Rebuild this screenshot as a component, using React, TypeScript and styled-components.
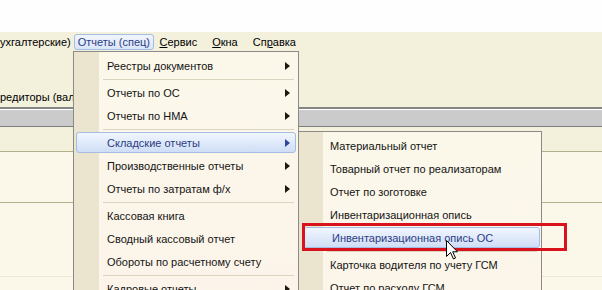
import React from 'react';
import styled, { createGlobalStyle, css } from 'styled-components';

const GlobalStyle = createGlobalStyle`
  html, body {
    margin: 0;
    padding: 0;
    background: #fefefe;
  }
  body {
    font-family: "Liberation Sans", Arial, sans-serif;
    font-size: 11px;
    color: #000000;
  }
`;

const Screen = styled.div`
  position: relative;
  width: 602px;
  height: 290px;
  overflow: hidden;
  background: #fbf8ea;
`;

const BlankTop = styled.div`
  height: 32px;
  background: #fefefe;
`;

const Toolbar = styled.div`
  height: 75px;
  background: #f3f0dc;
  display: flex;
  flex-direction: column;
`;

const MenuBar = styled.div`
  display: flex;
  align-items: center;
  height: 16px;
  margin-top: 2px;
  white-space: nowrap;
`;

const MenuTitle = styled.div<{ $active?: boolean; $first?: boolean }>`
  height: 16px;
  display: flex;
  align-items: center;
  padding: 0 7.5px;
  box-sizing: border-box;
  ${(p) =>
    p.$first &&
    css`
      padding: 0;
    `}
  ${(p) =>
    p.$active &&
    css`
      padding: 0 3px;
      margin: 0 -2px 0 3px;
      border: 1px solid #a3bce2;
      border-radius: 3px;
      background: linear-gradient(#f2f6fd, #d9e5f8);
      color: #2c3c84;
    `}
`;

const FilterRow = styled.div`
  margin-top: auto;
  height: 20px;
  display: flex;
  align-items: center;
  white-space: nowrap;
`;

const GrayBar = styled.div`
  height: 17px;
  background: #cbcbcb;
  border-top: 2px solid #858585;
  border-bottom: 1px solid #7d7d7d;
  box-shadow: inset 0 1px 0 #ffffff;
`;

const GridRow = styled.div<{ $h: number; $bg: string; $line: string }>`
  height: ${(p) => p.$h}px;
  background: ${(p) => p.$bg};
  border-bottom: 1px solid ${(p) => p.$line};
`;

const Popup = styled.div<{ $left: number; $top: number; $width: number; $gutter: number }>`
  position: absolute;
  left: ${(p) => p.$left}px;
  top: ${(p) => p.$top}px;
  width: ${(p) => p.$width}px;
  height: 320px;
  box-sizing: border-box;
  padding: 2px 0;
  border: 1px solid #8a8a8a;
  background:
    linear-gradient(to right, #ebe5cf 0 ${(p) => p.$gutter}px, transparent ${(p) => p.$gutter}px),
    linear-gradient(#fbf8ea, #fdf3ea);
`;

const Item = styled.div<{ $hot?: boolean; $pad: number; $m?: string }>`
  height: 23px;
  display: flex;
  align-items: center;
  box-sizing: border-box;
  padding: 0 8px 0 ${(p) => p.$pad}px;
  white-space: nowrap;
  color: #141414;
  ${(p) =>
    p.$hot &&
    css`
      height: 21px;
      margin: ${p.$m ?? '1px 2px'};
      padding: 0 5px 0 ${p.$pad - 3}px;
      border: 1px solid #a5bde3;
      border-radius: 3px;
      background: linear-gradient(#f1f6fe, #cfdef6);
      color: #2c3c84;
    `}
`;

const Arrow = styled.span<{ $hot?: boolean }>`
  margin-left: auto;
  width: 0;
  height: 0;
  border-top: 4.5px solid transparent;
  border-bottom: 4.5px solid transparent;
  border-left: 5px solid ${(p) => (p.$hot ? '#32479a' : '#1c1a10')};
`;

const Separator = styled.div<{ $left: number }>`
  height: 4px;
  display: flex;
  align-items: center;
  padding: 0 4px 0 ${(p) => p.$left}px;
  &::after {
    content: '';
    flex: 1;
    height: 1px;
    background: #d9d4bd;
  }
`;

const Callout = styled.div`
  position: absolute;
  left: 302px;
  top: 223px;
  width: 265px;
  height: 28px;
  box-sizing: border-box;
  border: 3px solid #d9121b;
`;

const Pointer = styled.svg`
  position: absolute;
  left: 446px;
  top: 240px;
`;

const U = styled.span`
  text-decoration: underline;
`;

type Entry = { label: string; sub?: boolean; hot?: boolean } | '-';

const mainItems: Entry[] = [
  { label: 'Реестры документов', sub: true },
  '-',
  { label: 'Отчеты по ОС', sub: true },
  { label: 'Отчеты по НМА', sub: true },
  '-',
  { label: 'Складские отчеты', sub: true, hot: true },
  { label: 'Производственные отчеты', sub: true },
  { label: 'Отчеты по затратам ф/х', sub: true },
  '-',
  { label: 'Кассовая книга' },
  { label: 'Сводный кассовый отчет' },
  { label: 'Обороты по расчетному счету' },
  '-',
  { label: 'Кадровые отчеты', sub: true },
];

const stockItems: Entry[] = [
  { label: 'Материальный отчет' },
  { label: 'Товарный отчет по реализаторам' },
  { label: 'Отчет по зоготовке' },
  { label: 'Инвентаризационная опись' },
  { label: 'Инвентаризационная опись ОС', hot: true },
  '-',
  { label: 'Карточка водителя по учету ГСМ' },
  { label: 'Отчет по расходу ГСМ' },
];

export default function App() {
  return (
    <Screen>
      <GlobalStyle />
      <BlankTop />
      <Toolbar>
        <MenuBar>
          <MenuTitle $first>ухгалтерские)</MenuTitle>
          <MenuTitle $active>Отчеты (спец)</MenuTitle>
          <MenuTitle>
            <U>С</U>ервис
          </MenuTitle>
          <MenuTitle>
            <U>О</U>кна
          </MenuTitle>
          <MenuTitle>
            Сп<U>р</U>авка
          </MenuTitle>
        </MenuBar>
        <FilterRow>редиторы (валюта)</FilterRow>
      </Toolbar>
      <GrayBar />
      <GridRow $h={24} $bg="#f3f0dc" $line="#b3ae8b" />
      <GridRow $h={50} $bg="#fbf8ea" $line="#b3ae8b" />
      <GridRow $h={73} $bg="#fbf8ea" $line="#ece8d6" />

      <Popup $left={73} $top={51} $width={226} $gutter={25}>
        {mainItems.map((it, i) =>
          it === '-' ? (
            <Separator key={i} $left={29} />
          ) : (
            <Item key={i} $hot={it.hot} $pad={33}>
              {it.label}
              {it.sub && <Arrow $hot={it.hot} />}
            </Item>
          )
        )}
      </Popup>

      <Popup $left={298} $top={131} $width={244} $gutter={24}>
        {stockItems.map((it, i) =>
          it === '-' ? (
            <Separator key={i} $left={28} />
          ) : (
            <Item key={i} $hot={it.hot} $pad={31} $m="1px 1px 1px 4px">
              {it.label}
            </Item>
          )
        )}
      </Popup>

      <Callout />
      <Pointer width="13" height="20" viewBox="0 0 13 20">
        <path
          d="M0.5 0.5 L0.5 16.5 L4.5 12.5 L7.5 19 L9.5 18 L6.7 11.8 L11.5 11.8 Z"
          fill="#ffffff"
          stroke="#000000"
          strokeWidth="1"
          strokeLinejoin="miter"
        />
      </Pointer>
    </Screen>
  );
}
